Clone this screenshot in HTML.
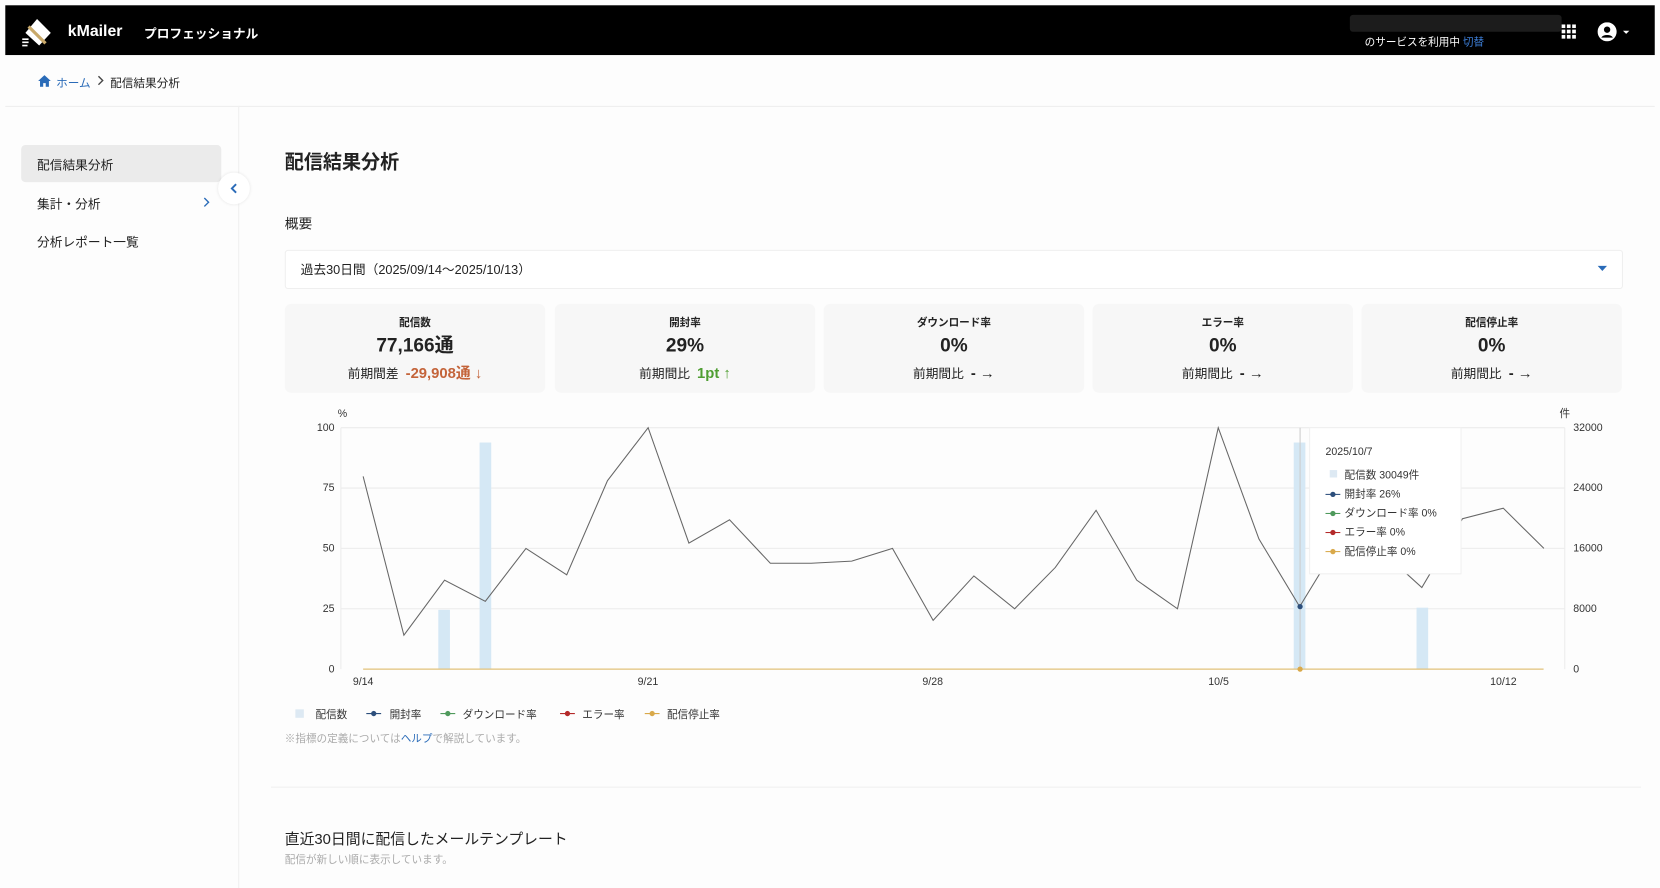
<!DOCTYPE html>
<html><head><meta charset="utf-8"><style>
html,body{margin:0;padding:0;width:1660px;height:888px;overflow:hidden;background:#fff}
#w{position:absolute;left:0;top:0;width:1568px;height:839px;transform:scale(1.0587);transform-origin:0 0;font-family:"Liberation Sans","Noto Sans CJK JP",sans-serif;color:#222;background:#fdfdfd}
.a{position:absolute;white-space:nowrap}
.card{position:absolute;top:287px;width:246px;height:84px;background:#f7f7f7;border-radius:6px;text-align:center}
.card .t{position:absolute;top:9px;left:0;right:0;font-size:10px;font-weight:bold}
.card .v{position:absolute;top:28px;left:0;right:0;font-size:18px;font-weight:bold;line-height:22px}
.card .c{position:absolute;top:56px;left:0;right:0;font-size:12px;line-height:18px}
.card .c b{font-size:14px}
</style></head><body><div id="w">
<div class="a" style="left:5px;top:5px;width:1558px;height:47px;background:#000"></div>
<svg class="a" style="left:19px;top:17px" width="32" height="28" viewBox="0 0 32 28"><path d="M5 14 L16 1 L29 14 L18 26 Z" fill="#fff"/><path d="M8 8 L24 24" stroke="#c9a96a" stroke-width="3"/><path d="M2 20h6M2 23h6M2 26h5" stroke="#fff" stroke-width="1.5"/></svg>
<div class="a" style="left:64px;top:21px;color:#fff;font-size:15px;font-weight:bold">kMailer</div>
<div class="a" style="left:136px;top:23px;color:#fff;font-size:12px;font-weight:bold">プロフェッショナル</div>
<div class="a" style="left:1275px;top:14px;width:200px;height:16px;background:#1c1c1c;border-radius:3px"></div>
<div class="a" style="left:1289px;top:31px;color:#fff;font-size:10px">のサービスを利用中 <span style="color:#3d7fd9">切替</span></div>
<svg class="a" style="left:1475px;top:23px" width="14" height="14"><g fill="#fff"><rect x="0" y="0" width="3.5" height="3.5"/><rect x="5" y="0" width="3.5" height="3.5"/><rect x="10" y="0" width="3.5" height="3.5"/><rect x="0" y="5" width="3.5" height="3.5"/><rect x="5" y="5" width="3.5" height="3.5"/><rect x="10" y="5" width="3.5" height="3.5"/><rect x="0" y="10" width="3.5" height="3.5"/><rect x="5" y="10" width="3.5" height="3.5"/><rect x="10" y="10" width="3.5" height="3.5"/></g></svg>
<svg class="a" style="left:1509px;top:21px" width="34" height="20"><circle cx="9" cy="9" r="9" fill="#fff"/><circle cx="9" cy="7" r="3" fill="#000"/><path d="M3.5 14.5a6 4 0 0 1 11 0" fill="#000"/><path d="M24 8h6l-3 3z" fill="#fff"/></svg>
<svg class="a" style="left:36px;top:71px" width="12" height="11"><path d="M6 0L0 5.5h1.8V11h3V7.5h2.4V11h3V5.5H12z" fill="#2a6bb8"/></svg>
<div class="a" style="left:53px;top:70px;font-size:11px;color:#2a6bb8">ホーム</div>
<svg class="a" style="left:91px;top:71px" width="8" height="10"><path d="M2 1l4 4-4 4" stroke="#444" stroke-width="1.3" fill="none"/></svg>
<div class="a" style="left:104px;top:70px;font-size:11px">配信結果分析</div>
<div class="a" style="left:5px;top:100px;width:1558px;height:1px;background:#eee"></div>
<div class="a" style="left:225px;top:100px;width:1px;height:739px;background:#f0f0f0"></div>
<div class="a" style="left:20px;top:137px;width:189px;height:35px;background:#ebebeb;border-radius:4px"></div>
<div class="a" style="left:35px;top:147px;font-size:12px">配信結果分析</div>
<div class="a" style="left:35px;top:184px;font-size:12px">集計・分析</div>
<svg class="a" style="left:191px;top:186px" width="8" height="10"><path d="M2 1l4 4-4 4" stroke="#2a6bb8" stroke-width="1.3" fill="none"/></svg>
<div class="a" style="left:35px;top:220px;font-size:12px">分析レポート一覧</div>
<div class="a" style="left:206px;top:163px;width:30px;height:30px;border-radius:50%;background:#fff;box-shadow:0 0 3px rgba(0,0,0,.1)"></div>
<svg class="a" style="left:216px;top:173px" width="10" height="10"><path d="M7 1L3 5l4 4" stroke="#2a6bb8" stroke-width="1.8" fill="none"/></svg>
<div class="a" style="left:269px;top:139px;font-size:18px;font-weight:bold">配信結果分析</div>
<div class="a" style="left:269px;top:201px;font-size:13px">概要</div>
<div class="a" style="left:269px;top:236px;width:1262px;height:35px;border:1px solid #efefef;border-radius:3px;background:#fff"></div>
<div class="a" style="left:284px;top:246px;font-size:12px">過去30日間（2025/09/14〜2025/10/13）</div>
<svg class="a" style="left:1509px;top:251px" width="10" height="6"><path d="M0 0h9l-4.5 5z" fill="#2a6bb8"/></svg>
<div class="card" style="left:269px"><div class="t">配信数</div><div class="v">77,166通</div><div class="c">前期間差 &nbsp;<b style="color:#c4643a">-29,908通 ↓</b></div></div>
<div class="card" style="left:524px"><div class="t">開封率</div><div class="v">29%</div><div class="c">前期間比 &nbsp;<b style="color:#4f9e32">1pt ↑</b></div></div>
<div class="card" style="left:778px"><div class="t">ダウンロード率</div><div class="v">0%</div><div class="c">前期間比 &nbsp;<b>- →</b></div></div>
<div class="card" style="left:1032px"><div class="t">エラー率</div><div class="v">0%</div><div class="c">前期間比 &nbsp;<b>- →</b></div></div>
<div class="card" style="left:1286px"><div class="t">配信停止率</div><div class="v">0%</div><div class="c">前期間比 &nbsp;<b>- →</b></div></div>
<svg class="a" style="left:0;top:0" width="1568" height="720" font-family="Liberation Sans,Noto Sans CJK JP,sans-serif" font-size="10" fill="#333">
<g stroke="#ececec" stroke-width="1"><line x1="322" y1="404" x2="1478" y2="404"/><line x1="322" y1="461" x2="1478" y2="461"/><line x1="322" y1="518" x2="1478" y2="518"/><line x1="322" y1="575" x2="1478" y2="575"/><line x1="322" y1="404" x2="322" y2="632"/><line x1="1478" y1="404" x2="1478" y2="632"/></g>
<text x="319" y="394">%</text><text x="1473" y="394">件</text>
<g text-anchor="end"><text x="316" y="407">100</text><text x="316" y="464">75</text><text x="316" y="521">50</text><text x="316" y="578">25</text><text x="316" y="635">0</text></g>
<text x="1486" y="407">32000</text><text x="1486" y="464">24000</text><text x="1486" y="521">16000</text><text x="1486" y="578">8000</text><text x="1486" y="635">0</text>
<g text-anchor="middle"><text x="343" y="647">9/14</text><text x="612" y="647">9/21</text><text x="881" y="647">9/28</text><text x="1151" y="647">10/5</text><text x="1420" y="647">10/12</text></g>
<g fill="#d5e8f5"><rect x="414" y="576" width="11" height="56"/><rect x="453" y="418" width="11" height="214"/><rect x="1222" y="418" width="11" height="214"/><rect x="1338" y="574" width="11" height="58"/></g>
<line x1="1228" y1="404" x2="1228" y2="632" stroke="#ccc"/>
<line x1="343" y1="632" x2="1458" y2="632" stroke="#e2c27a" stroke-width="1.2"/>
<polyline fill="none" stroke="#666" stroke-width="1" points="343,450 381.5,600 419.9,548 458.4,568 496.8,518 535.3,543 573.8,454 612.2,404 650.7,513 689.1,491 727.6,532 766.1,532 804.5,530 843,518 881.4,586 919.9,544 958.4,575 996.8,536 1035.3,482 1073.7,548 1112.2,575 1150.7,404 1189.1,509 1227.6,573 1266,510 1304.5,520 1343,555 1381.4,490 1419.9,480 1458.3,518"/>
<circle cx="1228" cy="573" r="2.5" fill="#2d4f7c"/><circle cx="1228" cy="632" r="2.5" fill="#d9a94a"/>
<rect x="1237" y="404" width="143" height="138" fill="#fff" stroke="#f0f0f0"/>
<text x="1252" y="430" font-size="10">2025/10/7</text>
<rect x="1256" y="444" width="7" height="7" fill="#dde9f3"/><text x="1270" y="452">配信数 30049件</text>
<line x1="1252" y1="467" x2="1266" y2="467" stroke="#2d4f7c"/><circle cx="1259" cy="467" r="2.5" fill="#2d4f7c"/><text x="1270" y="470">開封率 26%</text>
<line x1="1252" y1="485" x2="1266" y2="485" stroke="#4f9a5c"/><circle cx="1259" cy="485" r="2.5" fill="#4f9a5c"/><text x="1270" y="488">ダウンロード率 0%</text>
<line x1="1252" y1="503" x2="1266" y2="503" stroke="#b42a2a"/><circle cx="1259" cy="503" r="2.5" fill="#b42a2a"/><text x="1270" y="506">エラー率 0%</text>
<line x1="1252" y1="521" x2="1266" y2="521" stroke="#d9a94a"/><circle cx="1259" cy="521" r="2.5" fill="#d9a94a"/><text x="1270" y="524">配信停止率 0%</text>
<rect x="279" y="670" width="8" height="8" fill="#dde9f3"/><text x="298" y="678">配信数</text>
<line x1="346" y1="674" x2="360" y2="674" stroke="#2d4f7c"/><circle cx="353" cy="674" r="2.5" fill="#2d4f7c"/><text x="368" y="678">開封率</text>
<line x1="416" y1="674" x2="430" y2="674" stroke="#4f9a5c"/><circle cx="423" cy="674" r="2.5" fill="#4f9a5c"/><text x="437" y="678">ダウンロード率</text>
<line x1="529" y1="674" x2="543" y2="674" stroke="#b42a2a"/><circle cx="536" cy="674" r="2.5" fill="#b42a2a"/><text x="550" y="678">エラー率</text>
<line x1="609" y1="674" x2="623" y2="674" stroke="#d9a94a"/><circle cx="616" cy="674" r="2.5" fill="#d9a94a"/><text x="630" y="678">配信停止率</text>
</svg>
<div class="a" style="left:269px;top:689px;font-size:10px;color:#aaa">※指標の定義については<span style="color:#2a6bb8">ヘルプ</span>で解説しています。</div>
<div class="a" style="left:256px;top:743px;width:1294px;height:1px;background:#f0f0f0"></div>
<div class="a" style="left:269px;top:782px;font-size:14px">直近30日間に配信したメールテンプレート</div>
<div class="a" style="left:269px;top:803px;font-size:10px;color:#aaa">配信が新しい順に表示しています。</div>
</div></body></html>
